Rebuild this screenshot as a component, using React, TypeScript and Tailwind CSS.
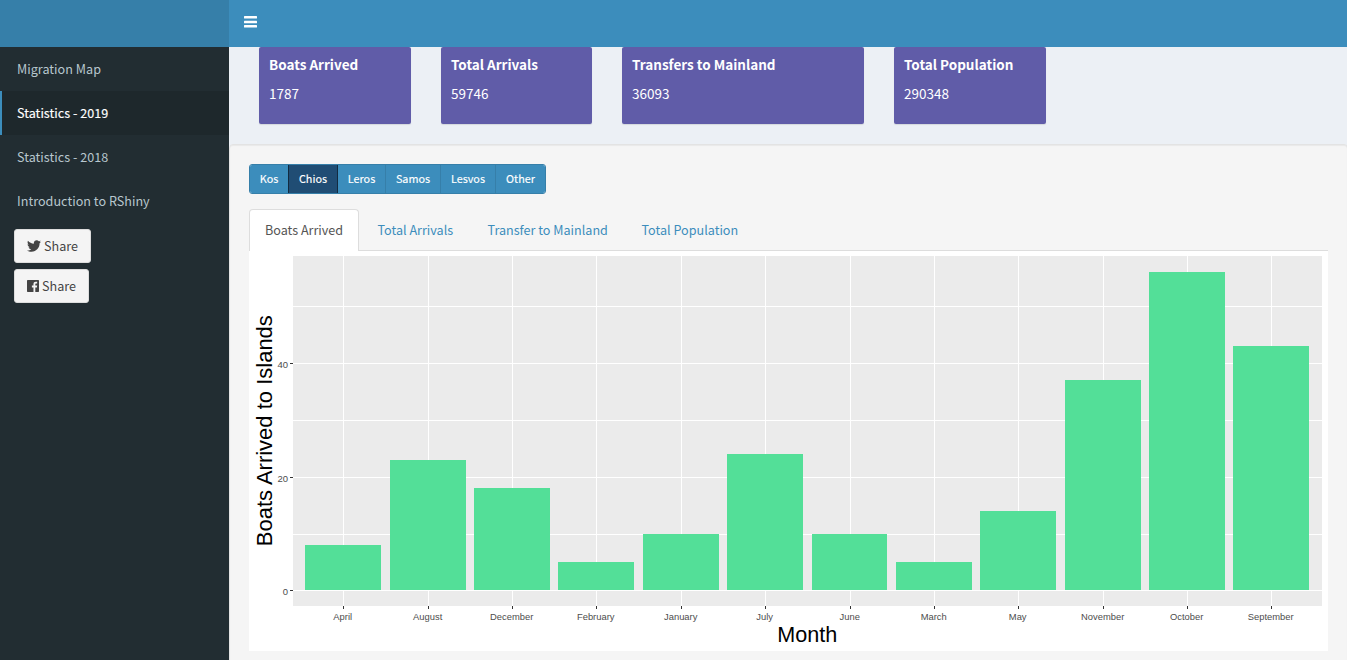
import { FaTwitter } from "react-icons/fa";

const MENU = ["Migration Map", "Statistics - 2019", "Statistics - 2018", "Introduction to RShiny"];

const CARDS = [
  { title: "Boats Arrived", value: "1787", width: "w-[152px]" },
  { title: "Total Arrivals", value: "59746", width: "w-[151px]" },
  { title: "Transfers to Mainland", value: "36093", width: "w-[242px]" },
  { title: "Total Population", value: "290348", width: "w-[152px]" },
];

const ISLANDS = [
  { name: "Kos", width: "w-[39px]" },
  { name: "Chios", width: "w-[50px]" },
  { name: "Leros", width: "w-[48px]" },
  { name: "Samos", width: "w-[55px]" },
  { name: "Lesvos", width: "w-[55px]" },
  { name: "Other", width: "w-[50px]" },
];

const TABS = [
  { name: "Boats Arrived", width: "w-[110px]" },
  { name: "Total Arrivals", width: "w-[108px]" },
  { name: "Transfer to Mainland", width: "w-[152px]" },
  { name: "Total Population", width: "w-[129px]" },
];

/* Bar geometry in chart pixels: left edge, width, top edge, tick position */
const BARS = [
  { month: "April", x: 56, w: 76, y: 294, tick: 94 },
  { month: "August", x: 141, w: 76, y: 209, tick: 179 },
  { month: "December", x: 225, w: 76, y: 237, tick: 263 },
  { month: "February", x: 309, w: 76, y: 311, tick: 347 },
  { month: "January", x: 394, w: 76, y: 283, tick: 432 },
  { month: "July", x: 478, w: 76, y: 203, tick: 516 },
  { month: "June", x: 563, w: 75, y: 283, tick: 601 },
  { month: "March", x: 647, w: 76, y: 311, tick: 685 },
  { month: "May", x: 731, w: 76, y: 260, tick: 769 },
  { month: "November", x: 816, w: 76, y: 129, tick: 854 },
  { month: "October", x: 900, w: 76, y: 21, tick: 938 },
  { month: "September", x: 984, w: 76, y: 95, tick: 1022 },
];

const GRID_Y = [55, 112, 169, 226, 283, 339];
const Y_LABELS = [
  { label: "40", y: 112 },
  { label: "20", y: 226 },
  { label: "0", y: 339 },
];

function Chart() {
  return (
    <svg width="1079" height="400" viewBox="0 0 1079 400" className="block bg-white font-['Liberation_Sans',sans-serif]">
      <g shapeRendering="crispEdges">
        <rect x="44" y="5" width="1029" height="350" fill="#ebebeb" />
        {GRID_Y.map((y) => (
          <rect key={y} x="44" y={y} width="1029" height="1" fill="#fff" />
        ))}
        {BARS.map((b) => (
          <g key={b.month}>
            <rect x={b.tick} y="5" width="1" height="350" fill="#fff" />
            <rect x={b.tick} y="355" width="1" height="3" fill="#333" />
            <rect x={b.x} y={b.y} width={b.w} height={339 - b.y} fill="#53df98" />
          </g>
        ))}
        {Y_LABELS.map((l) => (
          <rect key={l.label} x="41" y={l.y} width="3" height="1" fill="#333" />
        ))}
      </g>
      {Y_LABELS.map((l) => (
        <text key={l.label} x="39" y={l.y + 5} textAnchor="end" fontSize="9.5" fill="#4d4d4d">{l.label}</text>
      ))}
      {BARS.map((b) => (
        <text key={b.month} x={b.tick - 0.3} y="369" textAnchor="middle" fontSize="9.4" fill="#4d4d4d">{b.month}</text>
      ))}
      <text x="558.3" y="391" textAnchor="middle" fontSize="22" textLength="60" lengthAdjust="spacingAndGlyphs" fill="#000">Month</text>
      <text transform="translate(23 179.7) rotate(-90)" textAnchor="middle" fontSize="22" fill="#000">Boats Arrived to Islands</text>
    </svg>
  );
}

export default function App() {
  return (
    <div className="flex h-[660px] w-[1347px] flex-col overflow-hidden bg-[#ecf0f5] font-['Noto_Sans_CJK_JP',sans-serif] text-[12.6px] leading-5">
      <header className="flex h-[47px] shrink-0 bg-[#3c8dbc]">
        <div className="w-[229px] bg-[#367fa9]" />
        <div className="pl-[15px] pt-4 text-white">
          <svg width="13" height="12" viewBox="0 0 13 12" fill="currentColor">
            <rect y="0" width="13" height="2.6" rx="0.5" />
            <rect y="4.7" width="13" height="2.6" rx="0.5" />
            <rect y="9" width="13" height="2.6" rx="0.5" />
          </svg>
        </div>
      </header>
      <div className="flex min-h-0 flex-1">
        <aside className="w-[229px] shrink-0 bg-[#222d32]">
          <nav>
            {MENU.map((item, i) => (
              <div
                key={item}
                className={
                  i === 1
                    ? "flex h-11 items-center border-l-2 border-[#3c8dbc] bg-[#1e282c] pl-[15px] tracking-[0.03px] text-white [-webkit-text-stroke:0.15px_white]"
                    : "flex h-11 items-center pl-[17px] tracking-[0.02px] text-[#b8c7ce]"
                }
              >
                {item}
              </div>
            ))}
          </nav>
          <div className="flex flex-col items-start gap-1.5 pl-3.5 pt-1.5 text-[#444]">
            <div className="flex h-[34px] w-[77px] items-center rounded-[3px] border border-[#ddd] bg-[#f4f4f4] pl-3">
              <FaTwitter className="mr-[3px] size-[14px]" />
              Share
            </div>
            <div className="flex h-[34px] w-[75px] items-center rounded-[3px] border border-[#ddd] bg-[#f4f4f4] pl-3">
              <svg width="12" height="12" viewBox="0 0 13 13" className="mr-[3px]">
                <path
                  fill="currentColor"
                  d="M.7 0h11.6c.4 0 .7.3.7.7v11.6c0 .4-.3.7-.7.7H9V8h1.7l.3-2H9V4.8c0-.6.2-1 1-1h1V2c-.2 0-.8-.1-1.5-.1C8 1.9 7 2.800 7 4.500V6H5.300v2H7v5H.7c-.4 0-.7-.3-.7-.7V.7C0 .3.3 0 .7 0z"
                />
              </svg>
              Share
            </div>
          </div>
        </aside>
        <main className="w-[1118px] overflow-hidden">
          <div className="flex h-[97px] gap-[30px] pl-[30px]">
            {CARDS.map((c) => (
              <div
                key={c.title}
                className={`${c.width} h-[77px] rounded-[2px] bg-[#605ca8] pl-2.5 pt-[7px] text-[13.5px] text-white shadow-[0_1px_1px_rgba(0,0,0,0.1)]`}
              >
                <div className="whitespace-nowrap font-bold">{c.title}</div>
                <div className="mt-[9px]">{c.value}</div>
              </div>
            ))}
          </div>
          <section className="h-[540px] w-[1119px] rounded border border-[#e3e3e3] bg-[#f5f5f5] p-[19px] shadow-[inset_0_1px_1px_rgba(0,0,0,0.05)]">
            <div className="flex h-[30px] w-[297px] overflow-hidden rounded-[3px] border border-[#367fa9] text-[10.8px] text-white [-webkit-text-stroke:0.15px_white]">
              {ISLANDS.map((b, i) => (
                <div
                  key={b.name}
                  className={
                    i === 1
                      ? "-my-px -ml-px flex w-[50px] shrink-0 items-center justify-center border border-[#122b40] bg-[#204d74] pb-[2px]"
                      : `${b.width} flex shrink-0 items-center justify-center border-r border-[#367fa9] bg-[#3c8dbc] pb-[2px]`
                  }
                >
                  {b.name}
                </div>
              ))}
            </div>
            <div className="mt-[15px] flex h-[42px] border-b border-[#ddd]">
              {TABS.map((t, i) => (
                <div
                  key={t.name}
                  className={
                    i === 0
                      ? "-mb-px mr-[2px] flex w-[110px] shrink-0 items-center rounded-t border border-b-0 border-[#ddd] bg-white pb-[2px] pl-[15px] text-[#555]"
                      : `${t.width} mr-[2px] flex shrink-0 items-center pl-[16.5px] text-[#3c8dbc]`
                  }
                >
                  {t.name}
                </div>
              ))}
            </div>
            <Chart />
          </section>
        </main>
      </div>
    </div>
  );
}
